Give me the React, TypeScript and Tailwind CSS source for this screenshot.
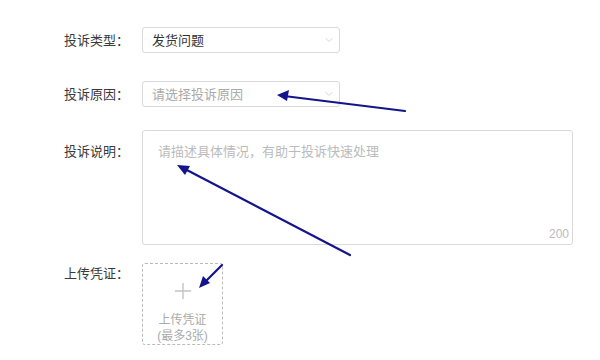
import { ChevronDown, Plus } from 'lucide-react';

const font = { fontFamily: '"Liberation Sans", "Noto Sans CJK SC", sans-serif' };

function Select({ value, placeholder }: { value?: string; placeholder?: string }) {
    return (
        <div className="w-[198px] h-[26px] border border-[#d9d9d9] rounded-[3px] flex items-center justify-between pl-[9px] pr-[4px] bg-white">
            <span className={`text-[13px] leading-none ${value ? 'text-[#333]' : 'text-[#aaa]'}`}>
                {value ?? placeholder}
            </span>
            <ChevronDown className="w-3 h-3 text-[#c8c8c8]" strokeWidth={1.5} />
        </div>
    );
}

function Label({ children, className = '' }: { children: string; className?: string }) {
    return (
        <div className={`w-[78px] shrink-0 text-[13px] leading-none text-[#3a3a3a] ${className}`}>{children}</div>
    );
}

export default function App() {
    return (
        <div className="relative w-[600px] h-[360px] bg-white overflow-hidden" style={font}>
            <div className="flex flex-col pl-[64px] pt-[27px]">
                {/* 投诉类型 */}
                <div className="flex items-center">
                    <Label>投诉类型：</Label>
                    <Select value="发货问题" />
                </div>

                {/* 投诉原因 */}
                <div className="flex items-center mt-[28px]">
                    <Label>投诉原因：</Label>
                    <Select placeholder="请选择投诉原因" />
                </div>

                {/* 投诉说明 */}
                <div className="flex items-start mt-[23px]">
                    <Label className="pt-[15px]">投诉说明：</Label>
                    <div className="relative w-[431px] h-[115px] border border-[#d9d9d9] rounded-[3px] pl-[15px] pt-[14px]">
                        <div className="text-[13px] leading-none text-[#bbb]">请描述具体情况，有助于投诉快速处理</div>
                        <span className="absolute right-[3px] bottom-[4px] text-[12px] leading-none text-[#bbb]">200</span>
                    </div>
                </div>

                {/* 上传凭证 */}
                <div className="flex items-start mt-[18px]">
                    <Label className="pt-[4px]">上传凭证：</Label>
                    <div className="w-[81px] h-[82px] border border-dashed border-[#bbb] rounded-[3px] flex flex-col items-center pt-[14px]">
                        <Plus className="w-[26px] h-[26px] text-[#c4c4c4]" strokeWidth={1.3} />
                        <span className="mt-[8px] text-[12px] leading-[16px] text-[#aaa]">上传凭证</span>
                        <span className="text-[12px] leading-[16px] text-[#aaa]">(最多3张)</span>
                    </div>
                </div>
            </div>

            {/* annotation arrows */}
            <svg className="absolute inset-0 pointer-events-none" width="600" height="360" viewBox="0 0 600 360">
                <g stroke="#14148c" strokeWidth="2.2" fill="#14148c" strokeLinecap="round">
                    <line x1="405" y1="111" x2="284" y2="96" />
                    <polygon points="277,95 289,90 287,101" stroke="none" />
                    <line x1="350" y1="255" x2="183" y2="168" />
                    <polygon points="177,165 190,166 185,175" stroke="none" />
                    <line x1="222" y1="265" x2="204" y2="283" />
                    <polygon points="199,288 203,276 210,283" stroke="none" />
                </g>
            </svg>
        </div>
    );
}
